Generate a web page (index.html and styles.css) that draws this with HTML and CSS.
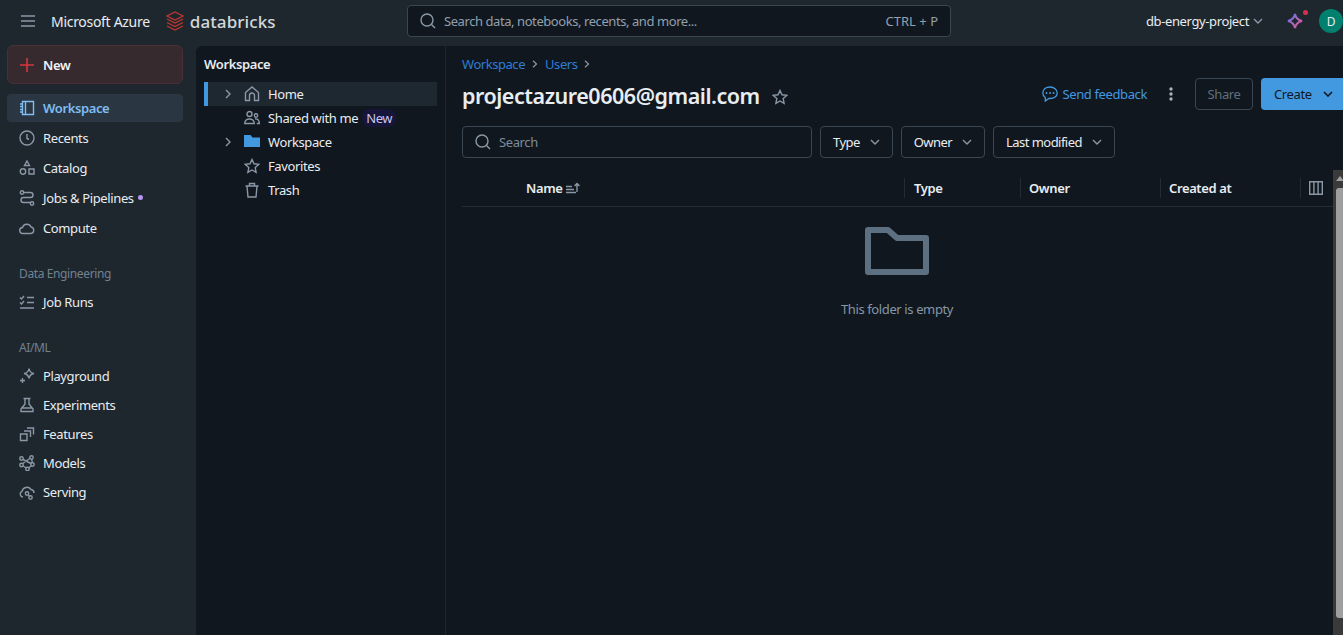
FILE: index.html
```html
<!DOCTYPE html>
<html lang="en">
<head>
    <meta charset="UTF-8">
    <title>projectazure0606@gmail.com - Databricks</title>
    <link rel="stylesheet" href="styles.css">
</head>
<body>
    <header class="topbar">
        <div class="top-left">
            <svg class="burger" width="16" height="14" viewBox="0 0 16 14"><path d="M1 2h14M1 7h14M1 12h14"/></svg>
            <span class="brand">Microsoft Azure</span>
            <svg class="logo" width="18" height="20" viewBox="0 0 18 20"><path d="M9 1l8 4-8 4-8-4zM1 8l8 4 8-4M1 11.5l8 4 8-4M1 15l8 4 8-4"/></svg>
            <span class="wordmark">databricks</span>
        </div>
        <div class="global-search">
            <svg class="ico" width="16" height="16" viewBox="0 0 16 16"><circle cx="7" cy="7" r="6"/><path d="M11.5 11.5l3.5 3.5"/></svg>
            <span class="global-hint">Search data, notebooks, recents, and more...</span>
            <span class="global-keys">CTRL + P</span>
        </div>
        <div class="top-right">
            <span class="project">db-energy-project</span>
            <svg class="chev" width="10" height="6" viewBox="0 0 10 6"><path d="M1 1l4 4 4-4"/></svg>
            <span class="assistant">
                <svg width="16" height="16" viewBox="0 0 16 16"><defs><linearGradient id="spark" x1="0" y1="0" x2="1" y2="1"><stop offset="0" stop-color="#5b7bf0"/><stop offset="1" stop-color="#f0508c"/></linearGradient></defs><path d="M8 1c.7 4 2.5 6 7 7-4.5 1-6.3 3-7 7-.7-4-2.5-6-7-7 4.5-1 6.3-3 7-7z" fill="none" stroke="url(#spark)" stroke-width="2"/></svg>
                <i class="assistant-dot"></i>
            </span>
            <span class="avatar">D</span>
        </div>
    </header>

    <div class="layout">
        <nav class="sidebar">
            <button class="new-btn">
                <svg width="16" height="16" viewBox="0 0 16 16"><path d="M1 8h14M8 1v14"/></svg>
                <span>New</span>
            </button>
            <a class="nav-item active">
                <svg class="ico" width="16" height="16" viewBox="0 0 16 16"><path d="M3.5 1.5h11v13h-11zM6.500 1.500v13M1 4h2.500M1 6.500h2.500M1 9.500h2.500M1 12h2.500"/></svg>
                Workspace
            </a>
            <a class="nav-item">
                <svg class="ico" width="16" height="16" viewBox="0 0 16 16"><circle cx="8" cy="8" r="7"/><path d="M8 4v4.500l2 1"/></svg>
                Recents
            </a>
            <a class="nav-item">
                <svg class="ico" width="16" height="16" viewBox="0 0 16 16"><path d="M8 1l2.500 4.500h-5z"/><circle cx="4" cy="11.5" r="2.7"/><path d="M10 9h5v5h-5z"/></svg>
                Catalog
            </a>
            <a class="nav-item">
                <svg class="ico" width="16" height="16" viewBox="0 0 16 16"><circle cx="3" cy="2.5" r="1.7"/><circle cx="13" cy="13.5" r="1.7"/><path d="M5 2.500h6.500a2.500 2.500 0 0 1 0 5h-7a2.500 2.500 0 0 0 0 5H11"/></svg>
                Jobs &amp; Pipelines <i class="nav-dot"></i>
            </a>
            <a class="nav-item">
                <svg class="ico" width="16" height="16" viewBox="0 0 16 16"><path d="M4 13.5a3 3 0 0 1-.5-6A4.500 4.500 0 0 1 12 7a3.300 3.300 0 0 1 0 6.500z"/></svg>
                Compute
            </a>
            <div class="nav-label first">Data Engineering</div>
            <a class="nav-item">
                <svg class="ico" width="16" height="16" viewBox="0 0 16 16"><path d="M1 3.500l1.500 1.500L5 2M8 3.500h7M1 8.500l1.500 1.500L5 7M8 8.500h7M1 14h14"/></svg>
                Job Runs
            </a>
            <div class="nav-label">AI/ML</div>
            <a class="nav-item tight">
                <svg class="ico" width="16" height="16" viewBox="0 0 16 16"><path d="M10 .5c.5 3.200 1.700 4.500 5 5-3.300.5-4.500 1.800-5 5-.5-3.200-1.700-4.500-5-5 3.300-.5 4.500-1.800 5-5zM3.500 10v5M1 12.500h5"/></svg>
                Playground
            </a>
            <a class="nav-item tight">
                <svg class="ico" width="16" height="16" viewBox="0 0 16 16"><path d="M4.500 1.500h7M6 1.500v5.500L2 12v2.500h12V12l-4-5V1.500M3 11h10"/></svg>
                Experiments
            </a>
            <a class="nav-item tight">
                <svg class="ico" width="16" height="16" viewBox="0 0 16 16"><path d="M1.500 8h6.500v6.500H1.500zM5 5h6.500v6M8 2h6.500v6.500"/></svg>
                Features
            </a>
            <a class="nav-item tight">
                <svg class="ico" width="16" height="16" viewBox="0 0 16 16"><circle cx="2.5" cy="3.5" r="1.7"/><circle cx="12.5" cy="2.5" r="1.7"/><circle cx="2.5" cy="10" r="1.7"/><circle cx="13.5" cy="9.5" r="1.7"/><circle cx="8.5" cy="14" r="1.7"/><path d="M4 4.500l8 4M11 3.300L3.500 8.700M12.600 4.200l.8 3.600M4 11l3.300 2M12.300 10.800l-2.600 2.200"/></svg>
                Models
            </a>
            <a class="nav-item tight">
                <svg class="ico" width="16" height="16" viewBox="0 0 16 16"><path d="M4 13a3 3 0 0 1-1-5.700A5 5 0 0 1 12 5.500a3.500 3.500 0 0 1 3 3.500"/><circle cx="8" cy="9.5" r="1.7"/><circle cx="11.5" cy="13.5" r="1.7"/><path d="M9.300 10.800l1 1.300"/></svg>
                Serving
            </a>
        </nav>

        <main class="panel">
            <aside class="tree">
                <div class="tree-title">Workspace</div>
                <div class="tree-row selected">
                    <svg class="caret" width="8" height="10" viewBox="0 0 8 10"><path d="M2 1l4 4-4 4"/></svg>
                    <svg class="ico" width="16" height="16" viewBox="0 0 16 16"><path d="M1.500 6.500L8 1l6.500 5.500v8h-4V9.500a2.500 2.500 0 0 0-5 0v5h-4z"/></svg>
                    <span>Home</span>
                </div>
                <div class="tree-row">
                    <span class="caret-gap"></span>
                    <svg class="ico" width="16" height="16" viewBox="0 0 16 16"><circle cx="5.5" cy="4" r="2.5"/><circle cx="12" cy="5.5" r="1.7"/><path d="M.7 13.500c0-6 9.600-6 9.600 0zM11 9c2.500-.5 4.300 1 4.300 4.500h-2.500"/></svg>
                    <span>Shared with me</span>
                    <span class="new-tag">New</span>
                </div>
                <div class="tree-row">
                    <svg class="caret" width="8" height="10" viewBox="0 0 8 10"><path d="M2 1l4 4-4 4"/></svg>
                    <svg class="folder-solid" width="16" height="16" viewBox="0 0 16 16"><path d="M0 1h6.500l2 2.500H16V13H0z"/></svg>
                    <span>Workspace</span>
                </div>
                <div class="tree-row">
                    <span class="caret-gap"></span>
                    <svg class="ico" width="16" height="16" viewBox="0 0 16 16"><path d="M8 1.500l2 4.300 4.700.6-3.500 3.200.9 4.700L8 12l-4.100 2.300.9-4.700L1.300 6.400 6 5.800z"/></svg>
                    <span>Favorites</span>
                </div>
                <div class="tree-row">
                    <span class="caret-gap"></span>
                    <svg class="ico" width="16" height="16" viewBox="0 0 16 16"><path d="M1.500 4h13M5.500 4V1.500h5V4M3 4l1 11h8l1-11"/></svg>
                    <span>Trash</span>
                </div>
            </aside>

            <section class="content">
                <div class="crumbs">
                    <a>Workspace</a>
                    <svg class="crumb-sep" width="6" height="8" viewBox="0 0 6 8"><path d="M1 .7L4.500 4 1 7.300"/></svg>
                    <a>Users</a>
                    <svg class="crumb-sep" width="6" height="8" viewBox="0 0 6 8"><path d="M1 .7L4.500 4 1 7.300"/></svg>
                </div>
                <div class="title-row">
                    <h1>projectazure0606@gmail.com</h1>
                    <svg class="ico star" width="16" height="16" viewBox="0 0 16 16"><path d="M8 1.500l2 4.300 4.700.6-3.500 3.200.9 4.700L8 12l-4.100 2.300.9-4.700L1.300 6.400 6 5.800z"/></svg>
                    <div class="actions">
                        <a class="feedback">
                            <svg width="16" height="16" viewBox="0 0 16 16"><path d="M8 1C4 1 .8 3.300.8 7c0 2 1 3.500 2.500 4.500V15l3.500-2.500H8c4 0 7.200-2 7.200-5.500S12 1 8 1z"/><path class="dots" d="M4.500 7h.1M8 7h.1M11.500 7h.1"/></svg>
                            Send feedback
                        </a>
                        <svg class="kebab" width="4" height="14" viewBox="0 0 4 14"><circle cx="2" cy="2" r="1.7"/><circle cx="2" cy="7" r="1.7"/><circle cx="2" cy="12" r="1.7"/></svg>
                        <button class="share">Share</button>
                        <button class="create">
                            Create
                            <svg width="10" height="6" viewBox="0 0 10 6"><path d="M1 1l4 4 4-4"/></svg>
                        </button>
                    </div>
                </div>
                <div class="filters">
                    <div class="search">
                        <svg class="ico" width="16" height="16" viewBox="0 0 16 16"><circle cx="7" cy="7" r="6"/><path d="M11.500 11.500l3.500 3.500"/></svg>
                        <span>Search</span>
                    </div>
                    <button class="filter">Type<svg class="chev" width="10" height="6" viewBox="0 0 10 6"><path d="M1 1l4 4 4-4"/></svg></button>
                    <button class="filter">Owner<svg class="chev" width="10" height="6" viewBox="0 0 10 6"><path d="M1 1l4 4 4-4"/></svg></button>
                    <button class="filter">Last modified<svg class="chev" width="10" height="6" viewBox="0 0 10 6"><path d="M1 1l4 4 4-4"/></svg></button>
                </div>
                <div class="table-head">
                    <div class="col col-name">Name
                        <svg class="ico" width="15" height="12" viewBox="0 0 15 12"><path d="M0 4.500h6M0 7.500h8M0 10.500h10M11 10V1.500M8.500 4L11 1.500 13.500 4"/></svg>
                    </div>
                    <div class="col col-type">Type</div>
                    <div class="col col-owner">Owner</div>
                    <div class="col col-created">Created at</div>
                    <div class="col col-cols">
                        <svg class="ico" width="14" height="14" viewBox="0 0 14 14"><path d="M.7.700h12.600v12.600H.7zM4.900.7v12.600M9.100.7v12.600"/></svg>
                    </div>
                </div>
                <div class="empty">
                    <svg width="64" height="48" viewBox="0 0 64 48"><path d="M3 3h20l9 8h29v34H3z"/></svg>
                    <p>This folder is empty</p>
                </div>
            </section>

            <div class="scrollbar">
                <i class="scroll-up"></i>
                <i class="scroll-thumb"></i>
            </div>
        </main>
    </div>
</body>
</html>
```

FILE: styles.css
```css
* {
    box-sizing: border-box;
}
html, body {
    height: 100%;
}
body {
    margin: 0;
    overflow: hidden;
    background-color: #1f272e;
    color: #e8edf1;
    font-family: "Noto Sans", Arial, sans-serif;
    font-size: 13px;
    letter-spacing: -0.38px;
}
button {
    font: inherit;
    letter-spacing: inherit;
}
svg {
    flex: none;
    fill: none;
}
.ico {
    stroke: #8a98a6;
    stroke-width: 1.4;
}
.chev {
    stroke: #8a98a6;
    stroke-width: 1.4;
}

/* top bar */
.topbar {
    display: flex;
    align-items: center;
    height: 46px;
    padding: 0 0 4px 20px;
}
.top-left {
    display: flex;
    align-items: center;
    width: 387px;
}
.burger {
    stroke: #8a98a6;
    stroke-width: 1.5;
}
.brand {
    margin-left: 15px;
    font-size: 14px;
    letter-spacing: -0.3px;
}
.logo {
    margin-left: 16px;
    stroke: #c2362f;
    stroke-width: 1.2;
}
.wordmark {
    margin-left: 6px;
    font-size: 17px;
    font-weight: 500;
    color: #d3d7da;
    letter-spacing: 0.1px;
}
.global-search {
    display: flex;
    align-items: center;
    width: 544px;
    height: 32px;
    padding: 0 12px;
    background-color: #11171f;
    border: 1px solid #3a4651;
    border-radius: 4px;
}
.global-hint {
    flex: 1;
    margin-left: 8px;
    color: #92a0ad;
    letter-spacing: -0.43px;
}
.global-keys {
    color: #92a0ad;
    letter-spacing: 0;
}
.top-right {
    display: flex;
    align-items: center;
    margin-left: auto;
}
.project {
    margin-right: 4px;
}
.assistant {
    position: relative;
    display: flex;
    margin-left: 24px;
}
.assistant-dot {
    position: absolute;
    top: -3px;
    right: -5px;
    width: 5px;
    height: 5px;
    border-radius: 50%;
    background-color: #d9304f;
}
.avatar {
    display: flex;
    align-items: center;
    justify-content: center;
    width: 24px;
    height: 24px;
    margin-left: 16px;
    border-radius: 50%;
    background-color: #00806e;
    color: #e8edf1;
    font-size: 12px;
}

/* layout */
.layout {
    display: flex;
    height: 589px;
}
.sidebar {
    display: flex;
    flex-direction: column;
    width: 196px;
    padding: 0 13px 0 7px;
}
.new-btn {
    display: flex;
    align-items: center;
    gap: 8px;
    width: 176px;
    height: 39px;
    margin-top: -1px;
    margin-bottom: 10px;
    padding: 0 11px;
    background-color: #362a2f;
    border: 1px solid #4a3034;
    border-radius: 6px;
    color: #f1f3f5;
    font-weight: 600;
}
.new-btn svg {
    stroke: #d9363e;
    stroke-width: 1.6;
}
.nav-item {
    display: flex;
    align-items: center;
    gap: 8px;
    height: 30px;
    padding-left: 12px;
}
.nav-item.tight {
    height: 29px;
}
.nav-item.active {
    height: 28px;
    margin-bottom: 1px;
    border-radius: 4px;
    background-color: #2a3742;
    color: #7fbdf2;
    font-weight: 600;
}
.nav-item.active .ico {
    stroke: #7fbdf2;
}
.nav-dot {
    width: 5px;
    height: 5px;
    margin-left: -4px;
    margin-bottom: 2px;
    border-radius: 50%;
    background-color: #b497f0;
}
.nav-label {
    height: 28px;
    margin-top: 16px;
    padding: 6px 0 0 12px;
    color: #71828f;
    font-size: 12px;
}
.nav-label.first {
    height: 29px;
    margin-top: 15px;
    padding-top: 7px;
}

/* main panel */
.panel {
    position: relative;
    display: flex;
    flex: 1;
    min-width: 0;
    background-color: #11171f;
    border-top-left-radius: 6px;
}
.tree {
    width: 250px;
    padding: 8px 8px 0;
    border-right: 1px solid #1f272e;
}
.tree-title {
    height: 28px;
    padding-top: 1px;
    font-weight: 600;
}
.tree-row {
    display: flex;
    align-items: center;
    height: 24px;
    padding-left: 20px;
}
.tree-row.selected {
    padding-left: 16px;
    background-color: #1e2831;
    border-left: 4px solid #4299e0;
}
.tree-row .ico,
.folder-solid {
    margin-right: 8px;
}
.caret {
    margin-right: 12px;
    stroke: #8a98a6;
    stroke-width: 1.4;
}
.caret-gap {
    width: 20px;
}
.folder-solid {
    fill: #4299e0;
}
.new-tag {
    margin-left: 4px;
    padding: 0 4px;
    border-radius: 8px;
    background-color: #17153a;
    color: #c9c6f5;
}

/* content */
.content {
    flex: 1;
    min-width: 0;
    padding: 8px 0 0 16px;
}
.crumbs {
    display: flex;
    align-items: center;
    gap: 7px;
    height: 20px;
    color: #2f7dd1;
    letter-spacing: -0.45px;
}
.crumb-sep {
    stroke: #8a98a6;
    stroke-width: 1.2;
}
.title-row {
    display: flex;
    align-items: center;
    height: 32px;
    margin-top: 4px;
}
h1 {
    margin: 4px 0 0;
    font-size: 21.5px;
    font-weight: 600;
    letter-spacing: -0.47px;
    line-height: 28px;
}
.star {
    margin-left: 12px;
    margin-top: 5px;
}
.actions {
    display: flex;
    align-items: center;
    margin-left: auto;
}
.feedback {
    display: flex;
    align-items: center;
    gap: 4px;
    color: #4299e0;
}
.feedback svg {
    stroke: #4299e0;
    stroke-width: 1.3;
}
.feedback .dots {
    stroke-width: 1.8;
    stroke-linecap: round;
}
.kebab {
    margin-left: 22px;
    fill: #a8b3bd;
}
.share {
    width: 58px;
    height: 32px;
    margin-left: 22px;
    background: none;
    border: 1px solid #3a4651;
    border-radius: 4px;
    color: #5f6f7d;
}
.create {
    display: flex;
    align-items: center;
    gap: 11px;
    flex: none;
    width: 82px;
    height: 32px;
    margin-left: 8px;
    padding-left: 13px;
    background-color: #4299e0;
    border: 0;
    border-radius: 4px 0 0 4px;
    color: #11171f;
}
.create svg {
    stroke: #11171f;
    stroke-width: 1.6;
}
.filters {
    display: flex;
    gap: 8px;
    margin-top: 16px;
}
.search {
    display: flex;
    align-items: center;
    gap: 8px;
    width: 350px;
    height: 32px;
    padding-left: 12px;
    border: 1px solid #3a4651;
    border-radius: 4px;
    color: #7d8c99;
}
.filter {
    display: flex;
    align-items: center;
    gap: 10px;
    height: 32px;
    padding: 0 12px;
    background: none;
    border: 1px solid #3a4651;
    border-radius: 4px;
    color: #e8edf1;
    letter-spacing: -0.55px;
}
.table-head {
    display: flex;
    align-items: center;
    width: 871px;
    height: 37px;
    margin-top: 12px;
    border-bottom: 1px solid #232c34;
    font-weight: 600;
}
.col {
    display: flex;
    align-items: center;
    height: 20px;
    padding-left: 8px;
    border-left: 1px solid #232c34;
}
.col-name {
    gap: 4px;
    width: 442px;
    padding-left: 64px;
    border-left: 0;
}
.col-type {
    width: 116px;
    padding-left: 9px;
}
.col-owner {
    width: 140px;
}
.col-created {
    width: 140px;
}
.col-cols {
    width: 33px;
}
.empty {
    display: flex;
    flex-direction: column;
    align-items: center;
    width: 870px;
    padding-top: 20px;
}
.empty svg {
    stroke: #5d7081;
    stroke-width: 6;
    stroke-linejoin: round;
}
.empty p {
    margin: 25px 0 0;
    color: #8597a6;
}
.scrollbar {
    position: absolute;
    top: 124px;
    right: 0;
    bottom: 0;
    width: 10px;
    background-color: #3a3a3a;
}
.scroll-up {
    position: absolute;
    top: 6px;
    left: 3px;
    border-left: 4px solid transparent;
    border-right: 4px solid transparent;
    border-bottom: 5px solid #a0a0a0;
}
.scroll-thumb {
    position: absolute;
    top: 18px;
    left: 3px;
    right: 0;
    height: 430px;
    border-radius: 3px 0 0 3px;
    background-color: #9f9f9f;
}
```
